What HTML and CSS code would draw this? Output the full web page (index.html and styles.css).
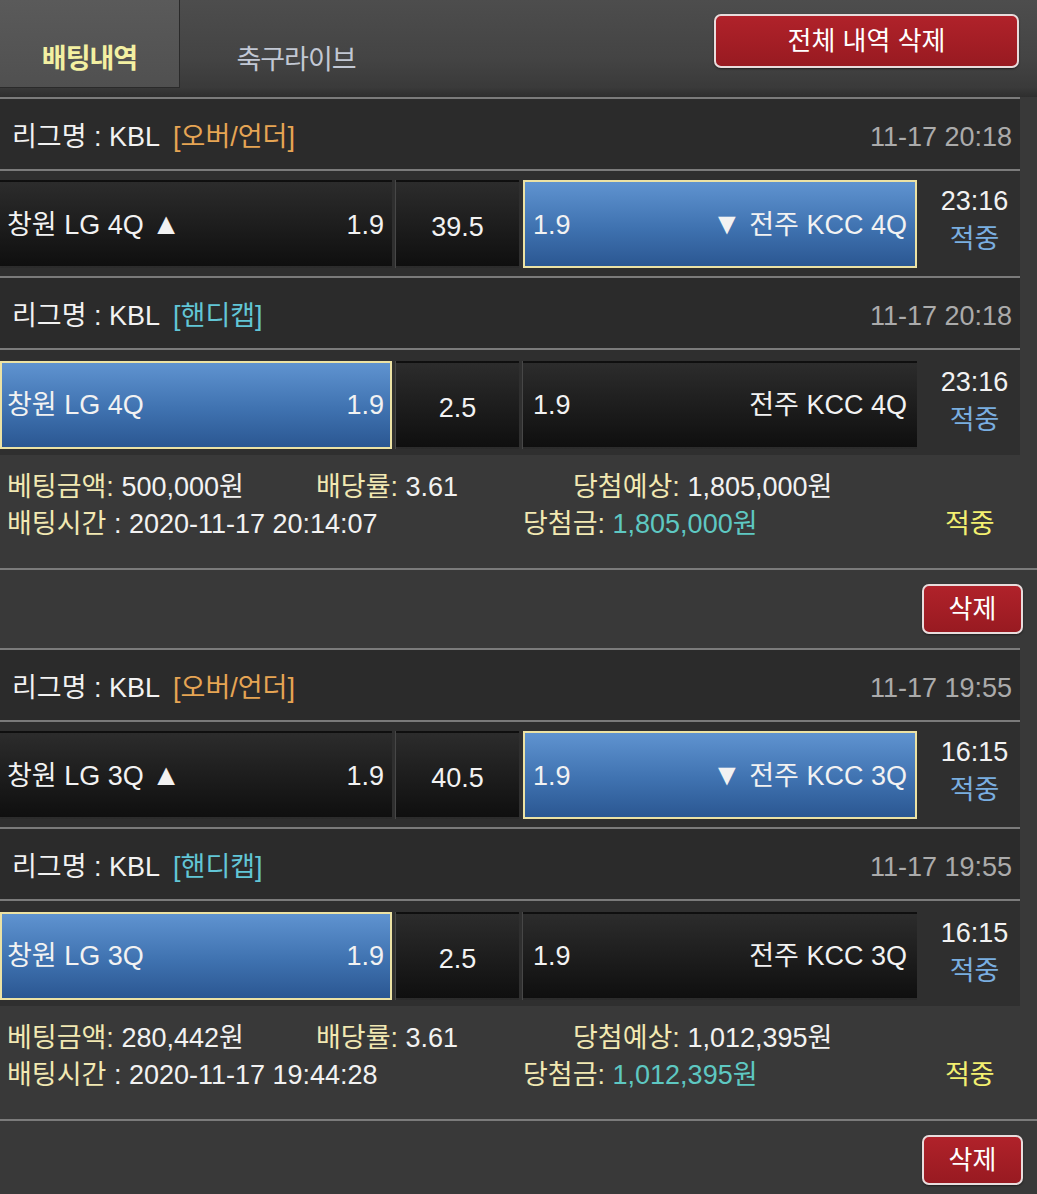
FILE: index.html
```html
<!DOCTYPE html>
<html lang="ko">
<head>
<meta charset="utf-8">
<title>배팅내역</title>
<link rel="stylesheet" href="styles.css">
</head>
<body>
<div class="page">
  <header class="top">
    <div class="tab active">배팅내역</div>
    <div class="tab">축구라이브</div>
    <div class="top-actions"><button class="btn btn-all">전체 내역 삭제</button></div>
  </header>

  <div class="bet">
    <div class="section">
      <div class="league"><span class="lname">리그명 : KBL</span><span class="type ou">[오버/언더]</span><span class="date">11-17 20:18</span></div>
      <div class="match">
        <div class="cell home"><span>창원 LG 4Q <span class="tri">▲</span></span><span>1.9</span></div>
        <div class="cell mid">39.5</div>
        <div class="cell away sel"><span>1.9</span><span><span class="tri">▼</span> 전주 KCC 4Q</span></div>
        <div class="time"><div>23:16</div><div class="hit">적중</div></div>
      </div>
    </div>
    <div class="section">
      <div class="league"><span class="lname">리그명 : KBL</span><span class="type hc">[핸디캡]</span><span class="date">11-17 20:18</span></div>
      <div class="match">
        <div class="cell home sel"><span>창원 LG 4Q</span><span>1.9</span></div>
        <div class="cell mid">2.5</div>
        <div class="cell away"><span>1.9</span><span>전주 KCC 4Q</span></div>
        <div class="time"><div>23:16</div><div class="hit">적중</div></div>
      </div>
    </div>
    <div class="info">
      <div class="info-row">
        <span class="c1"><span class="lbl">베팅금액:</span> 500,000원</span>
        <span class="c2"><span class="lbl">배당률:</span> 3.61</span>
        <span class="c3"><span class="lbl">당첨예상:</span> 1,805,000원</span>
      </div>
      <div class="info-row">
        <span class="d1"><span class="lbl">배팅시간</span> : 2020-11-17 20:14:07</span>
        <span class="d2"><span class="lbl">당첨금:</span> <span class="win">1,805,000원</span></span>
        <span class="d3">적중</span>
      </div>
    </div>
    <div class="actions"><button class="btn btn-del">삭제</button></div>
  </div>

  <div class="bet">
    <div class="section">
      <div class="league"><span class="lname">리그명 : KBL</span><span class="type ou">[오버/언더]</span><span class="date">11-17 19:55</span></div>
      <div class="match">
        <div class="cell home"><span>창원 LG 3Q <span class="tri">▲</span></span><span>1.9</span></div>
        <div class="cell mid">40.5</div>
        <div class="cell away sel"><span>1.9</span><span><span class="tri">▼</span> 전주 KCC 3Q</span></div>
        <div class="time"><div>16:15</div><div class="hit">적중</div></div>
      </div>
    </div>
    <div class="section">
      <div class="league"><span class="lname">리그명 : KBL</span><span class="type hc">[핸디캡]</span><span class="date">11-17 19:55</span></div>
      <div class="match">
        <div class="cell home sel"><span>창원 LG 3Q</span><span>1.9</span></div>
        <div class="cell mid">2.5</div>
        <div class="cell away"><span>1.9</span><span>전주 KCC 3Q</span></div>
        <div class="time"><div>16:15</div><div class="hit">적중</div></div>
      </div>
    </div>
    <div class="info">
      <div class="info-row">
        <span class="c1"><span class="lbl">베팅금액:</span> 280,442원</span>
        <span class="c2"><span class="lbl">배당률:</span> 3.61</span>
        <span class="c3"><span class="lbl">당첨예상:</span> 1,012,395원</span>
      </div>
      <div class="info-row">
        <span class="d1"><span class="lbl">배팅시간</span> : 2020-11-17 19:44:28</span>
        <span class="d2"><span class="lbl">당첨금:</span> <span class="win">1,012,395원</span></span>
        <span class="d3">적중</span>
      </div>
    </div>
    <div class="actions"><button class="btn btn-del">삭제</button></div>
  </div>
</div>
</body>
</html>
```

FILE: styles.css
```css
* { box-sizing: border-box; }

html, body {
  margin: 0;
  padding: 0;
  background: #393939;
}

body {
  font-family: "Liberation Sans", "Noto Sans CJK KR", sans-serif;
  font-size: 27px;
  color: #f2f2f2;
  overflow: hidden;
}

.page {
  width: 1037px;
}

/* top bar */
.top {
  height: 97px;
  display: flex;
  align-items: flex-start;
  background: linear-gradient(#4d4d4d 0%, #444 60%, #3a3a3a 90%, #2e2e2e 100%);
}

.tab {
  width: 180px;
  height: 88px;
  display: flex;
  align-items: center;
  justify-content: center;
  padding-top: 26px;
  font-size: 27px;
  color: #c2c8d4;
  letter-spacing: -1px;
}

.tab.active {
  background: linear-gradient(#5a5a5a, #505050);
  border-right: 1px solid #2a2a2a;
  border-bottom: 1px solid #2a2a2a;
  color: #f3f0a2;
  font-weight: bold;
}

.tab + .tab {
  width: 232px;
}

.top-actions {
  flex: 1;
  display: flex;
  justify-content: flex-end;
  padding: 14px 18px 0 0;
}

.btn {
  font-family: "Liberation Sans", "Noto Sans CJK KR", sans-serif;
  font-size: 26px;
  color: #fff;
  background: linear-gradient(#b0222a, #981a21);
  border: 2px solid #e8dcdc;
  border-radius: 7px;
  padding: 0;
  box-shadow: 0 1px 2px rgba(0,0,0,0.5);
}

.btn-all {
  width: 305px;
  height: 54px;
  line-height: 48px;
}

/* sections */
.section {
  width: 1020px;
}

.league {
  height: 72px;
  border-top: 2px solid #7b7b7b;
  background: #2b2b2b;
  display: flex;
  align-items: center;
  padding: 5px 8px 0 12px;
  line-height: 30px;
}

.type {
  margin-left: 13px;
}

.type.ou { color: #e6a554; }
.type.hc { color: #62c6d6; }

.date {
  margin-left: auto;
  color: #ababab;
}

.match {
  height: 107px;
  border-top: 2px solid #7b7b7b;
  background: #2f2f2f;
  display: flex;
  gap: 4px;
  padding: 9px 0 8px;
}

.section + .section .match {
  padding: 11px 0 6px;
}

.cell {
  height: 88px;
  display: flex;
  align-items: baseline;
  justify-content: space-between;
  border: 2px solid transparent;
  padding-top: 27px;
  line-height: 30px;
  white-space: nowrap;
  background: linear-gradient(#2c2c2c, #0f0f0f);
  box-shadow: -1px 0 0 #474747;
}

.tri {
  font-size: 30px;
}

.cell.home {
  width: 392px;
  padding-left: 5px;
  padding-right: 6px;
}

.cell.mid {
  width: 123px;
  justify-content: center;
  padding-top: 30px;
}

.cell.away {
  width: 394px;
  padding-left: 8px;
  padding-right: 8px;
}

.cell.sel {
  background: linear-gradient(#5f93d0, #3f72b0 55%, #2b5792);
  border-color: #ece2a4;
  box-shadow: none;
}

.time {
  width: 103px;
  margin-left: -4px;
  padding-left: 12px;
  display: flex;
  flex-direction: column;
  align-items: center;
  justify-content: center;
  line-height: 38px;
  padding-bottom: 8px;
}

.hit {
  color: #7aaee0;
}

/* info */
.info {
  padding: 14px 0 25px;
  border-bottom: 2px solid #7b7b7b;
  line-height: 37px;
}

.info-row {
  display: flex;
  white-space: nowrap;
}

.lbl { color: #f1e8b2; }

.c1 { width: 316px; padding-left: 7px; }
.c2 { width: 257px; }
.d1 { width: 523px; padding-left: 7px; }
.d2 { width: 422px; }
.d3 { color: #f3f070; }
.win { color: #5ec8c2; }

.actions {
  height: 78px;
  display: flex;
  justify-content: flex-end;
  align-items: flex-start;
  padding: 14px 14px 0 0;
}

.btn-del {
  width: 101px;
  height: 50px;
  line-height: 44px;
}
```
